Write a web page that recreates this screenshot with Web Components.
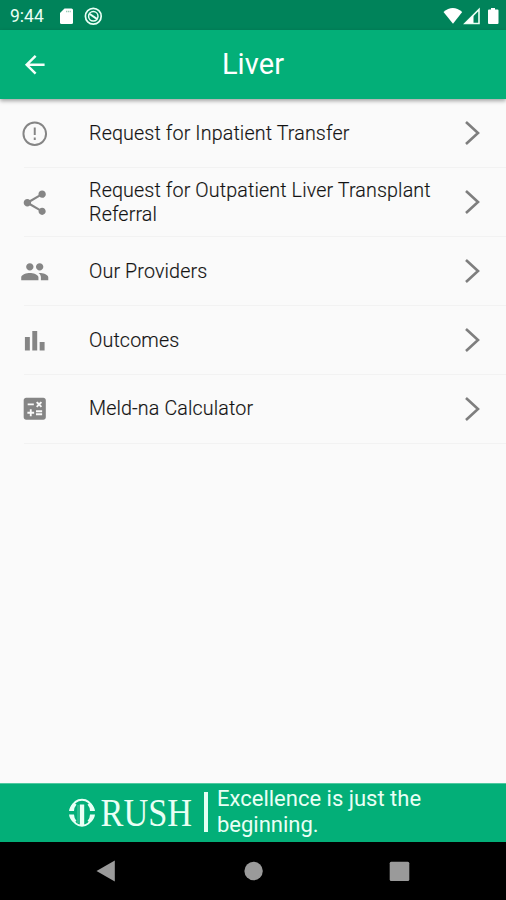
<!DOCTYPE html>
<html lang="en">
<head>
<meta charset="utf-8">
<title>Liver</title>
<style>
html,body{margin:0;height:100%;overflow:hidden}
body{font-family:Roboto,sans-serif;background:#fafafa}
</style>
</head>
<body>
<liver-screen></liver-screen>
<script>
const define = (name, html) => customElements.define(name, class extends HTMLElement {
  constructor() {
    super();
    this.attachShadow({ mode: 'open' }).innerHTML = html;
  }
});

const icons = {
  alert: '<path d="M11.200 15h1.600v2h-1.600zm0-8h1.600v6h-1.600zm.79-5C6.470 2 2 6.480 2 12s4.470 10 9.990 10C17.520 22 22 17.520 22 12S17.520 2 11.990 2zM12 20.400a8.400 8.400 0 1 1 0-16.800 8.400 8.400 0 0 1 0 16.800z"/>',
  share: '<path d="M18 16.080c-.76 0-1.440.3-1.960.77L8.910 12.700c.05-.23.09-.46.09-.7s-.04-.47-.09-.7l7.050-4.110c.54.5 1.250.81 2.040.81 1.660 0 3-1.340 3-3s-1.340-3-3-3-3 1.340-3 3c0 .24.04.47.09.7L8.040 9.810C7.500 9.310 6.790 9 6 9c-1.660 0-3 1.340-3 3s1.340 3 3 3c.79 0 1.500-.31 2.040-.81l7.120 4.160c-.05.21-.08.43-.08.65 0 1.610 1.310 2.920 2.920 2.920s2.920-1.310 2.920-2.920-1.310-2.920-2.920-2.920z"/>',
  people: '<path d="M16 11c1.660 0 2.990-1.340 2.990-3S17.660 5 16 5s-3 1.340-3 3 1.340 3 3 3zm-8 0c1.660 0 2.990-1.340 2.990-3S9.660 5 8 5 5 6.340 5 8s1.340 3 3 3zm0 2c-2.330 0-7 1.170-7 3.500V19h14v-2.500C15 14.170 10.330 13 8 13zm8 0c-.29 0-.62.02-.97.050 1.160.840 1.970 1.970 1.970 3.450V19h6v-2.500c0-2.330-4.670-3.500-7-3.500z"/>',
  chart: '<path d="M4 9h4v11H4zm12 4h4v7h-4zm-6-9h4v16h-4z"/>',
  calc: '<path d="M19 3H5c-1.100 0-2 .9-2 2v14c0 1.100.9 2 2 2h14c1.100 0 2-.9 2-2V5c0-1.100-.9-2-2-2zm-5.970 4.060L14.090 6l1.410 1.410L16.910 6l1.060 1.060-1.410 1.410 1.410 1.410-1.060 1.060-1.410-1.400-1.410 1.410-1.060-1.060 1.410-1.410-1.410-1.420zm-6.780.660h5v1.500h-5v-1.500zM11.500 16h-2v2H8v-2H6v-1.500h2v-2h1.500v2h2V16zm6.500 1.250h-5v-1.500h5v1.500zm0-2.500h-5v-1.500h5v1.500z"/>'
};

customElements.define('menu-icon', class extends HTMLElement {
  connectedCallback() {
    const root = this.shadowRoot || this.attachShadow({ mode: 'open' });
    root.innerHTML = `<style>:host{display:block;width:29.500px;height:29.500px}svg{display:block;width:100%;height:100%;fill:#858585}</style>
      <svg viewBox="0 0 24 24">${icons[this.getAttribute('name')]}</svg>`;
  }
});

define('status-bar', `<style>
:host{display:flex;box-sizing:border-box;height:30px;background:#00835a;color:#e9fff5;align-items:center;padding:1px 7px 0 10px;font-size:17.500px}
span{width:48px}
svg{display:block}
.left{flex:1}
</style>
<span>9:44</span>
<svg class="left" height="22" viewBox="58 4 384 22" preserveAspectRatio="xMinYMid meet">
 <path d="M64.500 7.500H71.500q1.500 0 1.500 1.500V21.500q0 1.500-1.500 1.500H61.500q-1.500 0-1.500-1.500v-9.500z" fill="#fff"/><path d="M66 10.500h5" stroke="#9cc9b6" stroke-width="1.600" stroke-dasharray="1.200 .6"/>
 <g fill="none" stroke="#e8fff5"><circle cx="93.300" cy="15.300" r="7.900" stroke-width="1.700"/><circle cx="93.300" cy="15.300" r="4.700" stroke-width="1.500"/><path d="M89 12.500l8.500 5.800" stroke-width="2"/></g>
</svg>
<svg width="56" height="22" viewBox="442 4 56 22">
 <path d="M442.500 11q9.300-8 18.700 0L452 22.700z" fill="#fff"/>
 <path d="M478 8.500v14h-14z" fill="none" stroke="#eafff3" stroke-width="1.600"/><path d="M472.500 14v8h-8z" fill="#fff"/>
 <path d="M490 7h4v1.500h2.500q1 0 1 1V22q0 1-1 1h-8.500q-1 0-1-1V9.500q0-1 1-1h2z" fill="#fff"/>
</svg>`);

define('app-bar', `<style>
:host{display:grid;grid-template-columns:70px 1fr 70px;align-items:center;height:69px;background:#03af78;color:#fff;box-shadow:0 2px 4px rgba(0,0,0,.35);z-index:1}
svg{display:block;justify-self:center;width:29.500px;height:29.500px;fill:#f4fff9}
h1{margin:0 0 1px;text-align:center;font-size:29px;font-weight:400;line-height:34px;letter-spacing:.1px}
</style>
<svg viewBox="0 0 24 24"><path d="M20 11H7.830l5.590-5.590L12 4l-8 8 8 8 1.410-1.410L7.830 13H20v-2z"/></svg>
<h1><slot></slot></h1>`);

define('menu-row', `<style>
:host{display:grid;grid-template-columns:69px 350px 1fr;align-items:center;height:68.800px;box-sizing:border-box;padding-left:20px;background:linear-gradient(#f2f2f2,#f2f2f2) 24px 100%/100% 1px no-repeat}
p{margin:0;font-size:19.700px;font-weight:300;line-height:23.500px;letter-spacing:.13px;color:#111;-webkit-text-stroke:.15px #222}
svg{display:block;justify-self:start;margin:0 0 1px 24px;fill:none;stroke:#7e7e7e;stroke-width:2.600}
</style>
<slot name="icon"></slot><p><slot></slot></p>
<svg width="20" height="26" viewBox="0 0 20 26"><path d="M3 2l12 11L3 24"/></svg>`);

define('brand-banner', `<style>
:host{display:flex;align-items:center;height:59px;box-sizing:border-box;padding-left:67px;background:#03af78;color:#e9fff5;box-shadow:inset 0 1px #4fc9a0}
svg{display:block;flex:none;overflow:visible}
i{width:3.500px;height:40px;background:#e4fff4;margin:0 9.500px 2px 10px}
p{margin:0 0 2px;font-size:22px;line-height:25.500px;width:215px}
</style>
<svg width="127" height="56" viewBox="67 784 127 56">
 <g fill="none" stroke="#e9fff5" stroke-width="2"><path d="M71.500 807C73.500 801.500 77 798.800 82 798.800S90.500 801.500 92.500 807"/><path d="M71.500 815.500C73.500 821.500 77 824.800 82 824.800S90.500 821.500 92.500 815.500"/></g>
 <path d="M69 810q.5-4.500 4.500-8l3 1.500q-2.500 3-2.500 6.500zM95 810q-.5-4.500-4.500-8l-3 1.500q2.500 3 2.500 6.500zM69 813.500q.5 4.500 4.500 8l3-1.500q-2.500-3-2.500-6.500zM95 813.500q-.5 4.500-4.500 8l-3-1.500q2.500-3 2.500-6.500z" fill="#e9fff5"/>
 <path d="M79.800 803.500h4.400v21h-4.400z" fill="#e9fff5"/><path d="M78 804v18" stroke="#e9fff5" stroke-width=".7" opacity=".5"/>
 <text x="100.500" y="825" font-family="Liberation Serif,serif" font-size="39" textLength="91.500" lengthAdjust="spacingAndGlyphs" fill="#e9fff5">RUSH</text>
</svg><i></i><p><slot></slot></p>`);

define('nav-bar', `<style>
:host{display:block;height:58px;background:#000}
svg{display:block;fill:#9a9a9a}
</style>
<svg width="506" height="58" viewBox="0 842 506 58"><path d="M96.500 871l18.300-10.500v21z"/><circle cx="253.600" cy="871" r="9.200"/><rect x="389.700" y="861.700" width="19.600" height="19.300" rx="1.500"/></svg>`);

define('liver-screen', `<style>
:host{display:flex;flex-direction:column;width:506px;height:900px;background:#fafafa}
main{flex:1;padding-top:.6px}
</style>
<status-bar></status-bar>
<app-bar>Liver</app-bar>
<main>
<menu-row><menu-icon slot="icon" name="alert"></menu-icon>Request for Inpatient Transfer</menu-row>
<menu-row><menu-icon slot="icon" name="share"></menu-icon>Request for Outpatient Liver Transplant Referral</menu-row>
<menu-row><menu-icon slot="icon" name="people"></menu-icon>Our Providers</menu-row>
<menu-row><menu-icon slot="icon" name="chart"></menu-icon>Outcomes</menu-row>
<menu-row><menu-icon slot="icon" name="calc"></menu-icon>Meld-na Calculator</menu-row>
</main>
<brand-banner>Excellence is just the beginning.</brand-banner>
<nav-bar></nav-bar>`);
</script>
</body>
</html>
